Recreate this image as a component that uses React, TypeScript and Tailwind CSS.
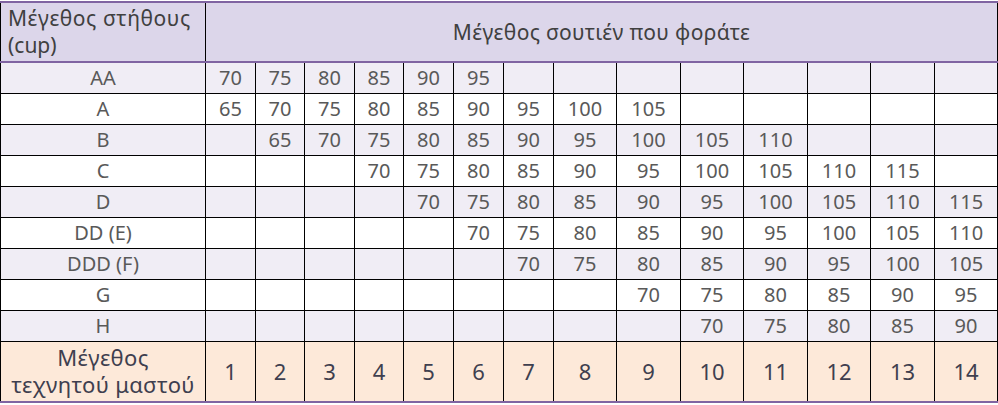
import React from "react";

const widths = [205, 50, 49, 50, 49, 50, 50, 50, 63, 64, 63, 64, 63, 64, 63];

type Row = { label: string; start: number; values: number[] };

const rows: Row[] = [
  { label: "AA", start: 1, values: [70, 75, 80, 85, 90, 95] },
  { label: "A", start: 1, values: [65, 70, 75, 80, 85, 90, 95, 100, 105] },
  { label: "B", start: 2, values: [65, 70, 75, 80, 85, 90, 95, 100, 105, 110] },
  { label: "C", start: 4, values: [70, 75, 80, 85, 90, 95, 100, 105, 110, 115] },
  { label: "D", start: 5, values: [70, 75, 80, 85, 90, 95, 100, 105, 110, 115] },
  { label: "DD (E)", start: 6, values: [70, 75, 80, 85, 90, 95, 100, 105, 110] },
  { label: "DDD (F)", start: 7, values: [70, 75, 80, 85, 90, 95, 100, 105] },
  { label: "G", start: 9, values: [70, 75, 80, 85, 90, 95] },
  { label: "H", start: 10, values: [70, 75, 80, 85, 90] },
];

export default function App() {
  return (
    <div
      className="w-[998px] h-[405px] bg-white pt-px"
      style={{ fontFamily: '"Noto Sans", "Open Sans", sans-serif' }}
    >
      <table className="table-fixed border-collapse w-[998px] text-[20px] leading-none">
        <colgroup>
          {widths.map((w, i) => (
            <col key={i} style={{ width: w }} />
          ))}
        </colgroup>
        <tbody>
          <tr className="bg-[#dcd6ea] border-t-2 border-b-2 border-t-[#8064a2] border-b-[#8064a2]">
            <td className="h-[60px] border-l border-r border-l-black border-r-black pl-[7px] pr-0 text-left align-middle text-[#404040] text-[21px] leading-[27px]">
              <div className="whitespace-nowrap tracking-[0.55px]">Μέγεθος στήθους</div>
              <div className="whitespace-nowrap">(cup)</div>
            </td>
            <td
              colSpan={14}
              className="h-[60px] border-r border-r-black text-center align-middle text-[#404040] text-[21px] tracking-[0.35px]"
            >
              Μέγεθος σουτιέν που φοράτε
            </td>
          </tr>
          {rows.map((r, ri) => (
            <tr key={r.label} className={ri % 2 === 0 ? "bg-[#f0edf5]" : "bg-white"}>
              <td className="h-[31px] border border-black text-center align-middle text-[#595959]">
                {r.label}
              </td>
              {Array.from({ length: 14 }, (_, ci) => {
                const idx = ci + 1 - r.start;
                const v = idx >= 0 && idx < r.values.length ? r.values[idx] : null;
                return (
                  <td
                    key={ci}
                    className="h-[31px] border border-black text-center align-middle text-[#595959]"
                  >
                    {v ?? ""}
                  </td>
                );
              })}
            </tr>
          ))}
          <tr className="bg-[#fde9d9] border-b-2 border-b-[#8064a2]">
            <td className="h-[61px] border-l border-r border-t border-black text-center align-middle text-[#3f3f4f] text-[22px] leading-[27px] tracking-[0.35px]">
              <div>Μέγεθος</div>
              <div className="whitespace-nowrap">τεχνητού μαστού</div>
            </td>
            {Array.from({ length: 14 }, (_, ci) => (
              <td
                key={ci}
                className="h-[61px] border-l border-r border-t border-black text-center align-middle text-[#3f3f4f] text-[22px]"
              >
                {ci + 1}
              </td>
            ))}
          </tr>
        </tbody>
      </table>
    </div>
  );
}
